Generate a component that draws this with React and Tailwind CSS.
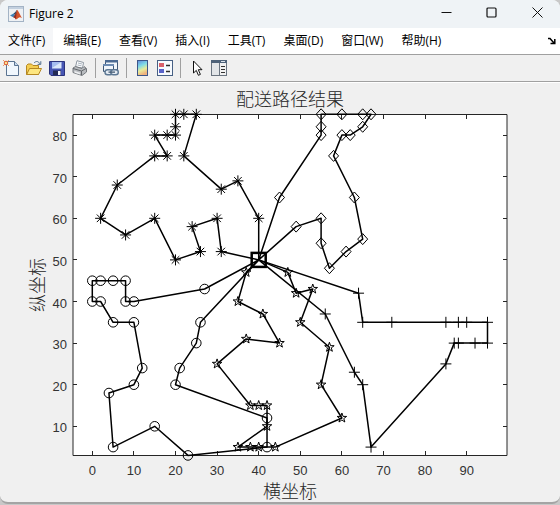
import React from "react";

const X0 = 92.3;
const Y0 = 467.9;
const UNIT = 4.16;
const px = (v) => X0 + v * UNIT;
const py = (v) => Y0 - v * UNIT;

const DEPOT = [40, 50];

const ROUTES = [
  {
    marker: "asterisk",
    stops: [[40, 60], [35, 69], [31, 67], [22, 75], [25, 85], [22, 85], [20, 85], [20, 82], [20, 80], [18, 80], [15, 80], [18, 75], [15, 75], [6, 68], [2, 60], [8, 56], [15, 60], [20, 50], [26, 52], [24, 58], [30, 60], [31, 52]],
  },
  {
    marker: "diamond",
    stops: [[45, 65], [55, 80], [55, 82], [55, 85], [60, 85], [65, 85], [67, 85], [65, 82], [62, 80], [60, 80], [58, 75], [63, 65], [65, 55], [61, 52], [57, 48], [55, 54], [55, 60], [49, 58]],
  },
  {
    marker: "circle",
    stops: [[27, 43], [10, 40], [8, 40], [8, 45], [5, 45], [2, 45], [0, 45], [0, 40], [2, 40], [5, 35], [10, 35], [12, 24], [10, 20], [4, 18], [5, 5], [15, 10], [23, 3], [42, 5], [42, 12], [20, 20], [21, 24], [25, 30], [26, 35]],
  },
  {
    marker: "star",
    stops: [[37, 47], [35, 40], [41, 37], [45, 30], [37, 31], [30, 25], [38, 15], [40, 15], [42, 15], [42, 10], [35, 5], [38, 5], [40, 5], [44, 5], [60, 12], [55, 20], [57, 29], [50, 35], [53, 43], [49, 42], [47, 47]],
  },
  {
    marker: "plus",
    stops: [[64, 42], [65, 35], [72, 35], [85, 35], [88, 35], [90, 35], [95, 35], [95, 30], [92, 30], [88, 30], [87, 30], [85, 25], [67, 5], [65, 20], [63, 23], [56, 37]],
  },
];

const MARKERS = {
  asterisk: "M-5.5 0H5.5M0-5.5V5.5M-3.8-3.8L3.8 3.8M-3.8 3.8L3.8-3.8",
  diamond: "M0-5.5L5 0L0 5.5L-5 0Z",
  circle: "M-4.8 0A4.8 4.8 0 1 0 4.8 0A4.8 4.8 0 1 0-4.8 0Z",
  star: "M0-5L1.15-1.6L4.75-1.55L1.87.6L2.95 4.05L0 2L-2.95 4.05L-1.87.6L-4.75-1.55L-1.15-1.6Z",
  plus: "M-5.5 0H5.5M0-5.5V5.5",
};

const X_TICKS = [0, 10, 20, 30, 40, 50, 60, 70, 80, 90];
const Y_TICKS = [10, 20, 30, 40, 50, 60, 70, 80];

const MENUS = ["文件(F)", "编辑(E)", "查看(V)", "插入(I)", "工具(T)", "桌面(D)", "窗口(W)", "帮助(H)"];

function MatlabLogo() {
  return (
    <svg className="size-4 shrink-0" viewBox="0 0 16 16" aria-hidden="true">
      <rect x=".5" y=".5" width="15" height="15" fill="#eef1f4" stroke="#a3b3c5" />
      <path d="M1 1H15V3H1Z" fill="#c3d0df" />
      <path d="M2 9.5L5.5 7.6L7.6 9.4L5.2 11.3Z" fill="#3f80b5" />
      <path d="M5.5 7.6C7 7 7.8 5 9 3.8L7.6 9.4Z" fill="#2c4a68" />
      <path d="M9 3.8C10.4 4.8 12 9 14 12C12.5 11.2 11.4 11 10.3 12C9.3 12.9 8.6 13.4 7.8 13.6C7.2 12.2 6.5 11.4 5.2 11.3C7 10.3 8 7 9 3.8Z" fill="#d4532a" />
      <path d="M9 3.8C8.6 7 8.3 10 7.8 13.6C7.2 12.2 6.5 11.4 5.2 11.3C7 10.3 8 7 9 3.8Z" fill="#8e2d25" />
    </svg>
  );
}

function NewIcon() {
  return (
    <svg className="size-4" viewBox="0 0 16 16" aria-hidden="true">
      <path d="M3.5 1.5H11.5L15.5 5.5V15.5H3.5Z" fill="#f1f7fd" stroke="#5b7391" />
      <path d="M11.5 1.5V5.5H15.5" fill="#c7d9ec" stroke="#5b7391" />
      <path d="M0 0L6 6M6 0L0 6" stroke="#ee9a66" />
      <circle cx="3" cy="3" r="1.8" fill="#fbe08d" stroke="#d95a35" />
    </svg>
  );
}

function OpenIcon() {
  return (
    <svg className="size-4" viewBox="0 0 16 16" aria-hidden="true">
      <path d="M.5 14.5V5.5L2 4H5.5L7 5.5H12.5V14.5Z" fill="#f4cd51" stroke="#b58722" />
      <path d="M3.5 8.5H15.5L12.5 14.5H.7Z" fill="#fde680" stroke="#b58722" />
      <path d="M8 3C10 .8 12.5 1 13.8 3.8M14.8 1.2V4.4H11.6" fill="none" stroke="#52708f" />
    </svg>
  );
}

function SaveIcon() {
  return (
    <svg className="size-4" viewBox="0 0 16 16" aria-hidden="true">
      <path d="M.5 1.5H15.5V15.5H2L.5 14Z" fill="#4756b4" stroke="#2c347c" />
      <path d="M3 2H12.5V8.5H3Z" fill="#dce8fa" />
      <path d="M3 2H12.5L3 8Z" fill="#a6bdf0" />
      <path d="M4 10.5H12V15H4Z" fill="#242b55" />
      <path d="M9 11H11.5V15H9Z" fill="#f5f7ff" />
    </svg>
  );
}

function PrintIcon() {
  return (
    <svg className="size-4" viewBox="0 0 16 16" aria-hidden="true">
      <path d="M5 .7L11.5 2.5L10.5 8L3.5 7Z" fill="#fff" stroke="#8d96a1" />
      <path d="M6 3L10 4M5.5 5L9.5 5.8" stroke="#a9b4c0" />
      <path d="M1 8L3.5 6.5L10 8.5L12 6.5L14.5 8.5V12L10 15.5L1 12.5Z" fill="#b9bcc0" stroke="#75797e" />
      <path d="M1 8.5L9.5 11L14 8.5M9.5 11V15" fill="none" stroke="#62666b" />
      <path d="M2.5 11L8 12.8V14.6L2.5 12.8Z" fill="#eceef0" />
    </svg>
  );
}

function LinkIcon() {
  return (
    <svg className="size-4" viewBox="0 0 16 16" aria-hidden="true">
      <rect x="2.5" y=".5" width="12" height="9" fill="#f1f6fb" stroke="#3f5877" />
      <path d="M2 0H15V2.5H2Z" fill="#4c6a92" />
      <path d="M.5 11.5V4.5H10.5V9" fill="#f1f6fb" stroke="#3f5877" />
      <path d="M0 4H11V6H0Z" fill="#6c8bb2" />
      <path d="M.5 11.5H3" stroke="#3f5877" />
      <rect x="2" y="9.7" width="7.5" height="5" rx="2.5" fill="#e4ebf3" stroke="#5d7894" strokeWidth="1.4" />
      <rect x="7.8" y="9.7" width="7.5" height="5" rx="2.5" fill="#e4ebf3" stroke="#5d7894" strokeWidth="1.4" />
      <path d="M5.5 12.2H12" stroke="#3f566f" strokeWidth="1.3" />
    </svg>
  );
}

function ColorbarIcon() {
  return (
    <svg className="size-4" viewBox="0 0 16 16" aria-hidden="true">
      <defs>
        <linearGradient id="bar" x1="0" y1="0" x2=".3" y2="1">
          <stop offset="0" stopColor="#6388dc" />
          <stop offset=".4" stopColor="#7fdbe8" />
          <stop offset=".7" stopColor="#e9ec9a" />
          <stop offset="1" stopColor="#efb27e" />
        </linearGradient>
      </defs>
      <rect x="3.5" y=".5" width="10" height="15" fill="url(#bar)" stroke="#3e5688" />
    </svg>
  );
}

function LegendIcon() {
  return (
    <svg className="size-4" viewBox="0 0 16 16" aria-hidden="true">
      <rect x=".5" y=".5" width="15" height="15" fill="#f7fafe" stroke="#476084" />
      <rect x="2" y="3" width="5" height="4" fill="#d9606a" />
      <rect x="2" y="9" width="5" height="4" fill="#5963c9" />
      <path d="M9 5.5H13M9 11.5H13" stroke="#2b2b2b" strokeWidth="1.4" />
    </svg>
  );
}

function PointerIcon() {
  return (
    <svg className="size-4" viewBox="0 0 16 16" aria-hidden="true">
      <path d="M5.5 1V13L8.3 10.4L10.4 15.3L12.4 14.4L10.3 9.7H14Z" fill="#fff" stroke="#111" />
    </svg>
  );
}

function InspectorIcon() {
  return (
    <svg className="size-4" viewBox="0 0 16 16" aria-hidden="true">
      <rect x=".5" y=".5" width="15" height="15" fill="#f2f2f2" stroke="#6a7480" />
      <path d="M0 0H16V3H0Z" fill="#4e6279" />
      <path d="M10 1.5H14" stroke="#dbe3ec" />
      <path d="M1 3H8V15H1Z" fill="#e2e5e8" />
      <path d="M8.5 3V15" stroke="#6a7480" />
      <path d="M10 6.5H14M10 9.5H14M10 12.5H14" stroke="#333" />
    </svg>
  );
}

function ToolButton({ label, children }) {
  return (
    <button type="button" aria-label={label} className="flex h-6 w-[23px] items-center pl-[3px]">
      {children}
    </button>
  );
}

function Separator() {
  return <div className="mr-1 ml-[3px] h-5 w-px bg-[#a0a0a0]" />;
}

function CaptionButtons() {
  return (
    <div className="flex h-full items-stretch pb-1">
      <button type="button" aria-label="最小化" className="flex w-[45px] items-center justify-center">
        <svg className="size-[11px]" viewBox="0 0 11 11" fill="none" stroke="#111">
          <path d="M.5 5.5H10.5" />
        </svg>
      </button>
      <button type="button" aria-label="最大化" className="flex w-[45px] items-center justify-center">
        <svg className="size-[11px]" viewBox="0 0 11 11" fill="none" stroke="#111">
          <rect x="1" y="1" width="9" height="9" rx="1" strokeWidth="1.2" />
        </svg>
      </button>
      <button type="button" aria-label="关闭" className="flex w-[46px] items-center justify-center">
        <svg className="size-[11px]" viewBox="0 0 11 11" fill="none" stroke="#111">
          <path d="M.5 .5L10.5 10.5M10.5 .5L.5 10.5" />
        </svg>
      </button>
    </div>
  );
}

function RoutePlot() {
  return (
    <svg className="block w-full" viewBox="0 83 560 419" role="img" aria-label="配送路径结果">
      <rect x="73" y="114.5" width="434" height="341" fill="#fff" />
      <g stroke="#262626" fill="none">
        <path d="M73 114.5H507V455.5H73Z" />
        {X_TICKS.map((t) => (
          <path key={t} d={`M${Math.floor(px(t))}.5 455V451M${Math.floor(px(t))}.5 115V119`} />
        ))}
        {Y_TICKS.map((t) => (
          <path key={t} d={`M73 ${Math.floor(py(t))}.5H77M507 ${Math.floor(py(t))}.5H503`} />
        ))}
      </g>
      <g fill="#333" className="font-['Liberation_Sans',Arial,sans-serif] text-[13px]">
        {X_TICKS.map((t) => (
          <text key={t} x={px(t)} y="475" textAnchor="middle">{t}</text>
        ))}
        {Y_TICKS.map((t) => (
          <text key={t} x="67" y={py(t) + 6} textAnchor="end">{t}</text>
        ))}
      </g>
      <g fill="none" stroke="#000">
        {ROUTES.map((r) => (
          <g key={r.marker}>
            <polyline
              strokeWidth="1.5"
              strokeLinejoin="round"
              points={[DEPOT, ...r.stops, DEPOT].map(([x, y]) => `${px(x)},${py(y)}`).join(" ")}
            />
            {r.stops.map(([x, y]) => (
              <path key={`${x}-${y}`} d={MARKERS[r.marker]} transform={`translate(${px(x)} ${py(y)})`} />
            ))}
          </g>
        ))}
        <rect x={px(40) - 7} y={py(50) - 7} width="14" height="14" strokeWidth="2.5" />
      </g>
      <g fill="#262626" textAnchor="middle" className="font-['Noto_Sans_CJK_SC',sans-serif] text-[18px] font-light">
        <text x="290" y="106">配送路径结果</text>
        <text x="290" y="498">横坐标</text>
        <text transform="translate(44 285) rotate(-90)">纵坐标</text>
      </g>
    </svg>
  );
}

export default function App() {
  return (
    <div className="flex min-h-screen flex-col bg-[#c8c8c8] pb-px font-['Open_Sans','Noto_Sans_CJK_SC',sans-serif] text-[12px] text-black">
      <div className="flex grow flex-col overflow-hidden rounded-lg border-b-2 border-[#a4a4a4] bg-[#f0f0f0]">
        <header className="flex h-7 items-center justify-between bg-[#eff3f6] pl-2">
          <div className="flex items-center gap-[5px]">
            <MatlabLogo />
            <h1 className="text-[12px] leading-4">Figure 2</h1>
          </div>
          <CaptionButtons />
        </header>
        <nav className="flex h-[26px] items-stretch justify-between bg-white pr-1">
          <div className="flex gap-[2px]">
            {MENUS.map((m) => (
              <button key={m} type="button" className="px-2 leading-6 whitespace-nowrap first:bg-[#f5f6f8]">
                {m}
              </button>
            ))}
          </div>
          <button type="button" aria-label="停靠" className="flex items-center">
            <svg className="size-2" viewBox="0 0 8 8" fill="none" stroke="#000" strokeWidth="1.5">
              <path d="M0 1.5H2L6 6M6.8 2V6.5H2.5" />
            </svg>
          </button>
        </nav>
        <div className="flex h-7 items-center border-y border-[#a0a0a0] bg-[#f0f0f0]" role="toolbar" aria-label="图窗工具栏">
          <ToolButton label="新建图窗"><NewIcon /></ToolButton>
          <ToolButton label="打开文件"><OpenIcon /></ToolButton>
          <ToolButton label="保存图窗"><SaveIcon /></ToolButton>
          <ToolButton label="打印图窗"><PrintIcon /></ToolButton>
          <Separator />
          <ToolButton label="链接绘图"><LinkIcon /></ToolButton>
          <Separator />
          <ToolButton label="插入颜色栏"><ColorbarIcon /></ToolButton>
          <ToolButton label="插入图例"><LegendIcon /></ToolButton>
          <Separator />
          <ToolButton label="编辑绘图"><PointerIcon /></ToolButton>
          <ToolButton label="打开属性检查器"><InspectorIcon /></ToolButton>
        </div>
        <main className="border-t border-white">
          <RoutePlot />
        </main>
      </div>
    </div>
  );
}
